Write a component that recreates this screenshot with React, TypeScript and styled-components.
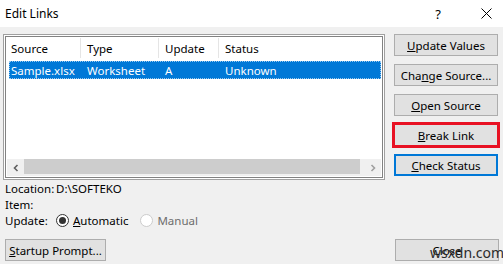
import React from "react";
import styled, { createGlobalStyle, css } from "styled-components";

const Global = createGlobalStyle`
  html, body { margin: 0; padding: 0; }
  body {
    width: 503px; height: 264px; overflow: hidden;
    background: #f0f0f0;
    font-family: "Noto Sans", "Open Sans", sans-serif;
    font-size: 11.5px; color: #000;
  }
  #root { width: 503px; height: 264px; }
`;

const Dialog = styled.div`
  position: relative;
  width: 503px; height: 264px;
  display: flex; flex-direction: column;
  background: #f0f0f0;
`;

const TitleBar = styled.div`
  height: 27px; background: #fff;
  display: flex; align-items: center;
  padding-left: 5px;
  font-size: 12px;
`;
const Title = styled.div` flex: 1; `;
const HelpBtn = styled.div`
  flex: none;
  width: 26px; height: 27px; margin-right: 18px;
  display: flex; align-items: center; justify-content: center;
  font-size: 13px;
`;
const CloseX = styled.div`
  flex: none;
  width: 34px; height: 27px;
  display: flex; align-items: center; justify-content: center;
`;

const Main = styled.div`
  display: flex;
  padding: 7px 5px 0 3px;
  gap: 9px;
`;

const ListBox = styled.div`
  width: 381px; height: 142px;
  border: 1px solid #a0a0a0;
  padding: 1px;
  background: #fff;
  display: flex; flex-direction: column;
`;
const ListInner = styled.div`
  flex: 1;
  border: 1px solid #828282;
  display: flex; flex-direction: column;
  padding: 1px;
`;
const Header = styled.div`
  display: grid;
  grid-template-columns: 74px 78px 60px 1fr;
  height: 20px;
`;
const HCell = styled.div<{ $first?: boolean; $last?: boolean }>`
  display: flex; align-items: center;
  padding-left: ${(p) => (p.$first ? 4 : 6)}px;
  border-right: ${(p) => (p.$last ? "none" : "1px solid #e5e5e5")};
`;
const Rows = styled.div`
  flex: 1;
  padding: 3px 0 0 2px;
`;
const Row = styled.div`
  display: grid;
  grid-template-columns: 72px 78px 60px 1fr;
  height: 18px;
  background: #0078d7; color: #fff;
  outline: 1px dotted #99c9ef; outline-offset: -1px;
`;
const Cell = styled.div<{ $first?: boolean }>`
  display: flex; align-items: center;
  padding-left: ${(p) => (p.$first ? 2 : 6)}px;
  white-space: nowrap;
`;
const HScroll = styled.div`
  height: 17px;
  display: flex;
  background: #f0f0f0;
`;
const ScrollArrow = styled.div`
  width: 17px; display: flex; align-items: center; justify-content: center;
  background: #f0f0f0;
`;
const Thumb = styled.div`
  flex: 1; margin: 0 4px 2px 0; background: #cdcdcd;
`;

const Side = styled.div`
  display: flex; flex-direction: column; gap: 8px;
`;
const Btn = styled.button<{ $variant?: "red" | "blue" }>`
  width: 104px; height: 22px;
  box-sizing: border-box;
  border: 1px solid #adadad;
  background: #e1e1e1;
  font-family: inherit; font-size: 11.5px; color: #000;
  padding: 0;
  display: flex; align-items: center; justify-content: center;
  ${(p) =>
    p.$variant === "red" &&
    css`
      border: 1px solid #e81123;
      outline: 2px solid #e81123;
    `}
  ${(p) =>
    p.$variant === "blue" &&
    css`
      border: 2px solid #0078d7;
    `}
  u { text-decoration: underline; text-underline-offset: 1px; }
`;

const Info = styled.div`
  display: flex; flex-direction: column;
  padding: 0 0 0 5px;
`;
const InfoRow = styled.div`
  display: flex; align-items: center; height: 16px;
`;
const Label = styled.div` width: 51px; flex-shrink: 0; `;
const Radio = styled.div<{ $disabled?: boolean }>`
  display: flex; align-items: center; gap: 4px;
  margin-right: 12px;
  color: ${(p) => (p.$disabled ? "#6d6d6d" : "#000")};
  u { text-decoration: underline; text-underline-offset: 1px; }
`;
const Circle = styled.div<{ $checked?: boolean; $disabled?: boolean }>`
  width: 11px; height: 11px; border-radius: 50%;
  border: 1px solid ${(p) => (p.$disabled ? "#cccccc" : "#333")};
  background: #fff;
  display: flex; align-items: center; justify-content: center;
  &::after {
    content: "";
    width: 7px; height: 7px; border-radius: 50%;
    background: ${(p) => (p.$checked ? "#333" : "transparent")};
  }
`;

const Footer = styled.div`
  display: flex; justify-content: space-between;
  padding: 0 4px 0 5px;
  margin-top: auto; margin-bottom: 3px;
`;
const StartupBtn = styled(Btn)`
  width: 101px;
`;
const Watermark = styled.div`
  position: absolute;
  left: 430px; top: 243px;
  font-size: 14px; color: #2b2b2b;
  font-family: "Noto Sans", sans-serif;
`;

const Chevron = ({ dir }: { dir: "l" | "r" }) => (
  <svg width="8" height="8" viewBox="0 0 8 8">
    <path
      d={dir === "l" ? "M5.5 1 L2.5 4 L5.5 7" : "M2.5 1 L5.5 4 L2.5 7"}
      fill="none"
      stroke={dir === "l" ? "#606060" : "#a0a0a0"}
      strokeWidth="1.6"
    />
  </svg>
);

export default function App() {
  return (
    <Dialog>
      <Global />
      <TitleBar>
        <Title>Edit Links</Title>
        <HelpBtn>?</HelpBtn>
        <CloseX>
          <svg width="11" height="11" viewBox="0 0 11 11">
            <path d="M0.5 0.5 L10.5 10.5 M10.5 0.5 L0.5 10.5" stroke="#000" strokeWidth="1" />
          </svg>
        </CloseX>
      </TitleBar>
      <Main>
        <ListBox>
          <ListInner>
            <Header>
              <HCell $first>Source</HCell>
              <HCell>Type</HCell>
              <HCell>Update</HCell>
              <HCell $last>Status</HCell>
            </Header>
            <Rows>
              <Row>
                <Cell $first>Sample.xlsx</Cell>
                <Cell>Worksheet</Cell>
                <Cell>A</Cell>
                <Cell>Unknown</Cell>
              </Row>
            </Rows>
            <HScroll>
              <ScrollArrow><Chevron dir="l" /></ScrollArrow>
              <Thumb />
              <ScrollArrow><Chevron dir="r" /></ScrollArrow>
            </HScroll>
          </ListInner>
        </ListBox>
        <Side>
          <Btn><span><u>U</u>pdate Values</span></Btn>
          <Btn><span>Cha<u>n</u>ge Source...</span></Btn>
          <Btn><span><u>O</u>pen Source</span></Btn>
          <Btn $variant="red"><span><u>B</u>reak Link</span></Btn>
          <Btn $variant="blue"><span><u>C</u>heck Status</span></Btn>
        </Side>
      </Main>
      <Info>
        <InfoRow><Label>Location:</Label>D:\SOFTEKO</InfoRow>
        <InfoRow><Label>Item:</Label></InfoRow>
        <InfoRow>
          <Label>Update:</Label>
          <Radio><Circle $checked /><span><u>A</u>utomatic</span></Radio>
          <Radio $disabled><Circle $disabled /><span>Manual</span></Radio>
        </InfoRow>
      </Info>
      <Footer>
        <StartupBtn><span><u>S</u>tartup Prompt...</span></StartupBtn>
        <Btn><span>Close</span></Btn>
      </Footer>
      <Watermark>wsxdn.com</Watermark>
    </Dialog>
  );
}
